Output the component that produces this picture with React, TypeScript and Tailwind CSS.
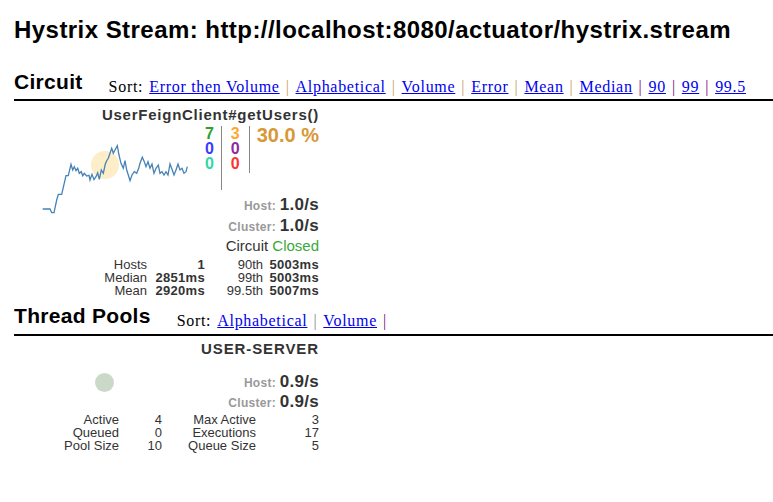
import React from "react";

const pts: [number, number][] = [
  [42.7, 209], [50, 209], [51.7, 212.7], [54, 212.7], [56.7, 200], [58.3, 194.3], [61.7, 194.3],
  [66, 175.7], [68.3, 175.7], [71, 164.3], [72.7, 170], [74.3, 166.7], [76, 170.7], [77.7, 168.3],
  [79.3, 173.3], [81.3, 171.7], [82.7, 175.7], [84.3, 173.3], [86.7, 176], [89, 175.3], [90, 180],
  [92, 174.3], [94, 179.7], [96, 176.7], [97.7, 172.7], [99.3, 179.3], [101.3, 170], [103.3, 173.3],
  [105.3, 164], [106.7, 160.7], [108.3, 158.3], [110, 153.3], [111.7, 148.3], [113.3, 153.3],
  [115, 150], [117.3, 145.7], [119, 155], [121, 163.3], [123.3, 168.3], [125, 160.7], [126.7, 170],
  [128.3, 175], [130, 180.7], [132, 175], [134.3, 171.7], [136.7, 173.3], [138.7, 168.3], [140, 163.3],
  [142.3, 157.3], [144.3, 161.7], [146, 166.7], [148, 161.7], [150, 168.3], [152, 164], [154, 173.3],
  [156, 168.3], [158.3, 165], [160, 173.3], [162, 171.7], [164, 175], [166, 171.7], [168, 175],
  [170, 164], [172, 169.3], [174, 175], [176, 170], [178, 164], [180, 170], [182, 168.3], [184, 173.3],
  [186, 171.7], [187.3, 166.7],
];

const sans = { fontFamily: '"Liberation Sans", Arial, sans-serif' };
const serif = { fontFamily: '"Liberation Serif", "Times New Roman", serif' };

function Sep({ purple }: { purple?: boolean }) {
  return <span className={purple ? "text-[#800080]" : "text-[#c8a060]"}>|</span>;
}

function SortLink({ children }: { children: React.ReactNode }) {
  return <a href="#" className="text-[#0000ee] underline">{children}</a>;
}

function Rate({ label, value, h }: { label: string; value: string; h: string }) {
  return (
    <div className={`relative flex items-baseline justify-end ${h}`}>
      <span className="text-[12px] font-bold text-[#999] tracking-[0.3px]">{label}&nbsp;</span>
      <span className="text-[17px] font-bold tracking-[0.3px]">{value}</span>
    </div>
  );
}

export default function App() {
  return (
    <div className="w-[773px] h-[502px] bg-white text-black overflow-hidden" style={sans}>
      <h1 className="pl-[14px] pt-[16px] text-[24px] leading-[28px] font-bold tracking-[0.45px]">
        Hystrix Stream: http://localhost:8080/actuator/hystrix.stream
      </h1>

      {/* Circuit header */}
      <div className="ml-[14px] mt-[26px] flex items-end border-b-2 border-black pb-[5px]">
        <h2 className="text-[21px] leading-[24px] font-bold tracking-[0.3px]">Circuit</h2>
        <div className="ml-[26px] flex items-end gap-[6px] text-[16px] leading-[15px] tracking-[0.7px]" style={serif}>
          <span>Sort:</span>
          <SortLink>Error then Volume</SortLink>
          <Sep />
          <SortLink>Alphabetical</SortLink>
          <Sep />
          <SortLink>Volume</SortLink>
          <Sep />
          <SortLink>Error</SortLink>
          <Sep />
          <SortLink>Mean</SortLink>
          <Sep />
          <SortLink>Median</SortLink>
          <Sep purple />
          <SortLink>90</SortLink>
          <Sep purple />
          <SortLink>99</SortLink>
          <Sep purple />
          <SortLink>99.5</SortLink>
        </div>
      </div>

      {/* Circuit card */}
      <div className="relative ml-[14px] w-[306px] pr-px pt-[6px] flex flex-col items-end text-[#333]">
        <svg
          className="absolute left-[26px] top-[39px]"
          width="150"
          height="78"
          viewBox="40 140 150 78"
        >
          <circle cx="105" cy="165" r="14" fill="#fce9bc" fillOpacity="0.8" />
          <polyline
            points={pts.map((p) => p.join(",")).join(" ")}
            fill="none"
            stroke="#4682b4"
            strokeWidth="1.3"
          />
        </svg>

        <div className="relative text-[15px] leading-[16px] font-bold tracking-[0.75px]">UserFeignClient#getUsers()</div>

        <div className="relative mt-[3px] flex items-start h-[64px]">
          <div className="pr-[7px] text-right text-[16px] leading-[15px] font-bold">
            <div className="text-[#2f9e2f]">7</div>
            <div className="text-[#3b3bff]">0</div>
            <div className="text-[#33d6a6]">0</div>
          </div>
          <div className="w-px h-[64px] bg-[#888]" />
          <div className="px-[9px] text-[16px] leading-[15px] font-bold">
            <div className="text-[#ffa733]">3</div>
            <div className="text-[#8e2b9e]">0</div>
            <div className="text-[#ff3333]">0</div>
          </div>
          <div className="w-px h-[47px] bg-[#888]" />
          <div className="pl-[7px] text-[20px] leading-[18px] font-bold text-[#d89838]">30.0 %</div>
        </div>

        <div className="mt-[2px] flex flex-col items-end">
          <Rate label="Host:" value="1.0/s" h="h-[21px]" />
          <Rate label="Cluster:" value="1.0/s" h="h-[21px]" />
        </div>
        <div className="mt-[2px] h-[20px] text-[15px] leading-[20px]">
          Circuit <span className="text-[#3aa83a]">Closed</span>
        </div>

        <div className="mt-[2px] self-start ml-[76px] grid grid-cols-[57px_58px_58px_56px] text-[13px] leading-[13px] text-right">
          <span>Hosts</span>
          <span className="font-bold tracking-[0.3px]">1</span>
          <span>90th</span>
          <span className="font-bold tracking-[0.3px]">5003ms</span>
          <span>Median</span>
          <span className="font-bold tracking-[0.3px]">2851ms</span>
          <span>99th</span>
          <span className="font-bold tracking-[0.3px]">5003ms</span>
          <span>Mean</span>
          <span className="font-bold tracking-[0.3px]">2920ms</span>
          <span>99.5th</span>
          <span className="font-bold tracking-[0.3px]">5007ms</span>
        </div>
      </div>

      {/* Thread Pools header */}
      <div className="ml-[14px] mt-[7px] flex items-end border-b-2 border-black pb-[6px]">
        <h2 className="text-[21px] leading-[24px] font-bold tracking-[0.3px]">Thread Pools</h2>
        <div className="ml-[26px] flex items-end gap-[6px] text-[16px] leading-[15px] tracking-[0.7px]" style={serif}>
          <span>Sort:</span>
          <SortLink>Alphabetical</SortLink>
          <span className="text-[#888]">|</span>
          <SortLink>Volume</SortLink>
          <Sep purple />
        </div>
      </div>

      {/* Thread pool card */}
      <div className="relative ml-[14px] w-[306px] pr-px pt-[5px] flex flex-col items-end text-[#333]">
        <div className="absolute left-[81px] top-[37px] w-[19px] h-[19px] rounded-full bg-[#cbd9c9]" />
        <div className="text-[15px] leading-[16px] font-bold tracking-[0.9px]">USER-SERVER</div>
        <div className="mt-[12px] flex flex-col items-end">
          <Rate label="Host:" value="0.9/s" h="h-[20px]" />
          <Rate label="Cluster:" value="0.9/s" h="h-[20px]" />
        </div>
        <div className="mt-[4px] self-start ml-[46px] grid grid-cols-[59px_43px_94px_63px] text-[13px] leading-[13px] text-right">
          <span>Active</span>
          <span>4</span>
          <span>Max Active</span>
          <span>3</span>
          <span>Queued</span>
          <span>0</span>
          <span>Executions</span>
          <span>17</span>
          <span>Pool Size</span>
          <span>10</span>
          <span>Queue Size</span>
          <span>5</span>
        </div>
      </div>
    </div>
  );
}
